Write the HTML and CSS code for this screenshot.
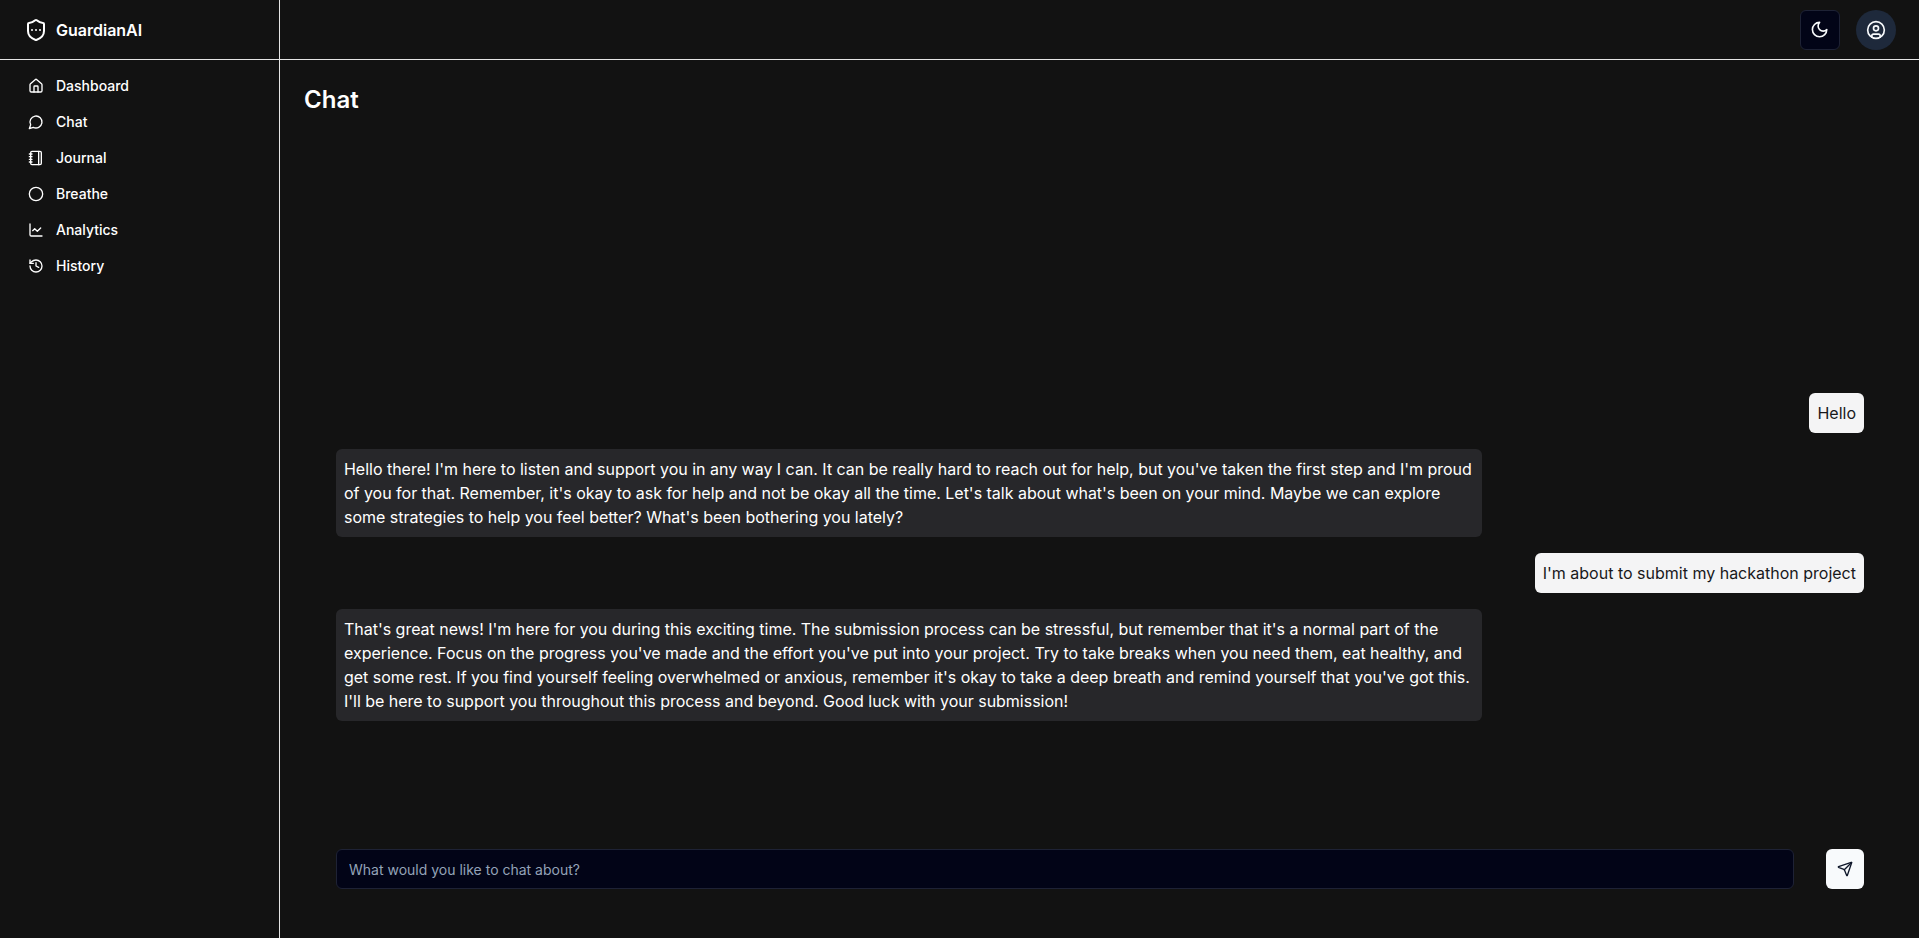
FILE: index.html
```html
<!DOCTYPE html>
<html lang="en">
<head>
    <meta charset="UTF-8">
    <meta name="viewport" content="width=device-width, initial-scale=1.0">
    <title>GuardianAI - Chat</title>
    <link rel="stylesheet" href="styles.css">
</head>
<body>
    <div class="app">
        <!-- Top bar -->
        <header class="topbar">
            <div class="brand">
                <svg class="brand-icon" viewBox="0 0 24 24"><path d="M20 13c0 5-3.5 7.5-7.66 8.95a1 1 0 0 1-.67-.01C7.5 20.5 4 18 4 13V6a1 1 0 0 1 1-1c2 0 4.5-1.2 6.24-2.72a1.17 1.17 0 0 1 1.52 0C14.51 3.81 17 5 19 5a1 1 0 0 1 1 1z"/><path d="M8 12h.01"/><path d="M12 12h.01"/><path d="M16 12h.01"/></svg>
                <span>GuardianAI</span>
            </div>
            <div class="topbar-actions">
                <button class="theme-btn">
                    <svg class="icon" viewBox="0 0 24 24"><path d="M12 3a6 6 0 0 0 9 9 9 9 0 1 1-9-9Z"/></svg>
                </button>
                <button class="user-btn">
                    <svg class="icon" viewBox="0 0 24 24"><circle cx="12" cy="12" r="10"/><circle cx="12" cy="10" r="3"/><path d="M7 20.662V19a2 2 0 0 1 2-2h6a2 2 0 0 1 2 2v1.662"/></svg>
                </button>
            </div>
        </header>

        <div class="content">
            <!-- Sidebar -->
            <nav class="sidebar">
                <a class="nav-item" href="#">
                    <svg class="icon" viewBox="0 0 24 24"><path d="M15 21v-8a1 1 0 0 0-1-1h-4a1 1 0 0 0-1 1v8"/><path d="M3 10a2 2 0 0 1 .709-1.528l7-5.999a2 2 0 0 1 2.582 0l7 5.999A2 2 0 0 1 21 10v9a2 2 0 0 1-2 2H5a2 2 0 0 1-2-2z"/></svg>
                    <span class="nav-label">Dashboard</span>
                </a>
                <a class="nav-item" href="#">
                    <svg class="icon" viewBox="0 0 24 24"><path d="M7.9 20A9 9 0 1 0 4 16.1L2 22Z"/></svg>
                    <span class="nav-label">Chat</span>
                </a>
                <a class="nav-item" href="#">
                    <svg class="icon" viewBox="0 0 24 24"><path d="M2 6h4"/><path d="M2 10h4"/><path d="M2 14h4"/><path d="M2 18h4"/><rect width="16" height="20" x="4" y="2" rx="2"/><path d="M16 2v20"/></svg>
                    <span class="nav-label">Journal</span>
                </a>
                <a class="nav-item" href="#">
                    <svg class="icon" viewBox="0 0 24 24"><circle cx="12" cy="12" r="10"/></svg>
                    <span class="nav-label">Breathe</span>
                </a>
                <a class="nav-item" href="#">
                    <svg class="icon" viewBox="0 0 24 24"><path d="M3 3v16a2 2 0 0 0 2 2h16"/><path d="m19 9-5 5-4-4-3 3"/></svg>
                    <span class="nav-label">Analytics</span>
                </a>
                <a class="nav-item" href="#">
                    <svg class="icon" viewBox="0 0 24 24"><path d="M3 12a9 9 0 1 0 9-9 9.75 9.75 0 0 0-6.74 2.74L3 8"/><path d="M3 3v5h5"/><path d="M12 7v5l4 2"/></svg>
                    <span class="nav-label">History</span>
                </a>
            </nav>

            <!-- Chat -->
            <main class="main">
                <h1>Chat</h1>
                <div class="chat">
                    <div class="messages">
                        <div class="msg msg-user">Hello</div>
                        <div class="msg msg-bot">Hello there! I'm here to listen and support you in any way I can. It can be really hard to reach out for help, but you've taken the first step and I'm proud of you for that. Remember, it's okay to ask for help and not be okay all the time. Let's talk about what's been on your mind. Maybe we can explore some strategies to help you feel better? What's been bothering you lately?</div>
                        <div class="msg msg-user">I'm about to submit my hackathon project</div>
                        <div class="msg msg-bot">That's great news! I'm here for you during this exciting time. The submission process can be stressful, but remember that it's a normal part of the experience. Focus on the progress you've made and the effort you've put into your project. Try to take breaks when you need them, eat healthy, and get some rest. If you find yourself feeling overwhelmed or anxious, remember it's okay to take a deep breath and remind yourself that you've got this. I'll be here to support you throughout this process and beyond. Good luck with your submission!</div>
                    </div>
                    <form class="chat-form">
                        <input class="chat-input" type="text" placeholder="What would you like to chat about?">
                        <button class="send-btn" type="button">
                            <svg class="icon" viewBox="0 0 24 24"><path d="M14.536 21.686a.5.5 0 0 0 .937-.024l6.5-19a.496.496 0 0 0-.635-.635l-19 6.5a.5.5 0 0 0-.024.937l7.93 3.18a2 2 0 0 1 1.112 1.11z"/><path d="m21.854 2.147-10.94 10.939"/></svg>
                        </button>
                    </form>
                </div>
            </main>
        </div>
    </div>
</body>
</html>
```

FILE: styles.css
```css
/* Global Styles */
* {
    box-sizing: border-box;
}

body {
    margin: 0;
    height: 100vh;
    overflow: hidden;
    font-family: 'Inter', 'Liberation Sans', sans-serif;
    background-color: #121212;
    color: #FFFFFF;
}

.app {
    display: flex;
    flex-direction: column;
    height: 100%;
}

.icon {
    width: 16px;
    height: 16px;
    fill: none;
    stroke: currentColor;
    stroke-width: 2;
    stroke-linecap: round;
    stroke-linejoin: round;
    flex-shrink: 0;
}

/* Top bar */
.topbar {
    display: flex;
    justify-content: space-between;
    height: 60px;
    flex-shrink: 0;
    border-bottom: 1px solid #E5E5E5;
}

.brand {
    display: flex;
    align-items: center;
    gap: 8px;
    width: 280px;
    padding-left: 24px;
    border-right: 1px solid #E5E5E5;
    font-size: 16px;
    font-weight: 600;
}

.brand-icon {
    width: 24px;
    height: 24px;
    fill: none;
    stroke: currentColor;
    stroke-width: 2;
    stroke-linecap: round;
    stroke-linejoin: round;
}

.topbar-actions {
    display: flex;
    align-items: center;
    gap: 16px;
    padding-right: 23px;
}

.theme-btn, .user-btn {
    display: flex;
    align-items: center;
    justify-content: center;
    width: 40px;
    height: 40px;
    padding: 0;
    color: #F8FAFC;
}

.theme-btn {
    background-color: #020417;
    border: 1px solid #1E2235;
    border-radius: 6px;
}

.theme-btn .icon {
    width: 19.2px;
    height: 19.2px;
}

.user-btn {
    background-color: #1E293B;
    border: none;
    border-radius: 50%;
}

.user-btn .icon {
    width: 20px;
    height: 20px;
}

/* Sidebar */
.content {
    display: flex;
    flex: 1;
    min-height: 0;
}

.sidebar {
    display: flex;
    flex-direction: column;
    width: 280px;
    flex-shrink: 0;
    padding: 8px 16px;
    border-right: 1px solid #E5E5E5;
}

.nav-item {
    display: flex;
    align-items: center;
    gap: 12px;
    height: 36px;
    padding-left: 12px;
    font-size: 14px;
    font-weight: 500;
    color: #FFFFFF;
    text-decoration: none;
}

.nav-label {
    padding-bottom: 2px; /* sits a pixel above the icon centre */
}

/* Main area */
.main {
    display: flex;
    flex-direction: column;
    flex: 1;
    min-width: 0;
    padding: 24px 24px 49px;
}

h1 {
    margin: 0;
    font-size: 24px;
    line-height: 32px;
    font-weight: 600;
}

.chat {
    display: flex;
    flex-direction: column;
    flex: 1;
    min-height: 0;
    padding: 0 31px 0 32px;
}

.messages {
    display: flex;
    flex-direction: column;
    justify-content: flex-end;
    gap: 16px;
    flex: 1;
    padding-bottom: 128px;
}

.msg {
    padding: 8px;
    border-radius: 6px;
    font-size: 16px;
    line-height: 24px;
    max-width: 75%;
}

.msg-user {
    align-self: flex-end;
    background-color: #F4F4F5;
    color: #18181B;
}

.msg-bot {
    align-self: flex-start;
    background-color: #27272A;
    color: #FFFFFF;
    letter-spacing: -0.018px;
}

.chat-form {
    display: flex;
    align-items: center;
    gap: 32px;
}

.chat-input {
    flex: 1;
    height: 40px;
    padding: 8px 12px;
    background-color: #020417;
    border: 1px solid #1E2235;
    border-radius: 6px;
    font-family: inherit;
    font-size: 14px;
    color: #F8FAFC;
}

.chat-input::placeholder {
    color: #94A3B8;
}

.send-btn {
    display: flex;
    align-items: center;
    justify-content: center;
    width: 38px;
    height: 40px;
    padding: 0;
    background-color: #F8FAFC;
    color: #0F172A;
    border: none;
    border-radius: 6px;
}
```
